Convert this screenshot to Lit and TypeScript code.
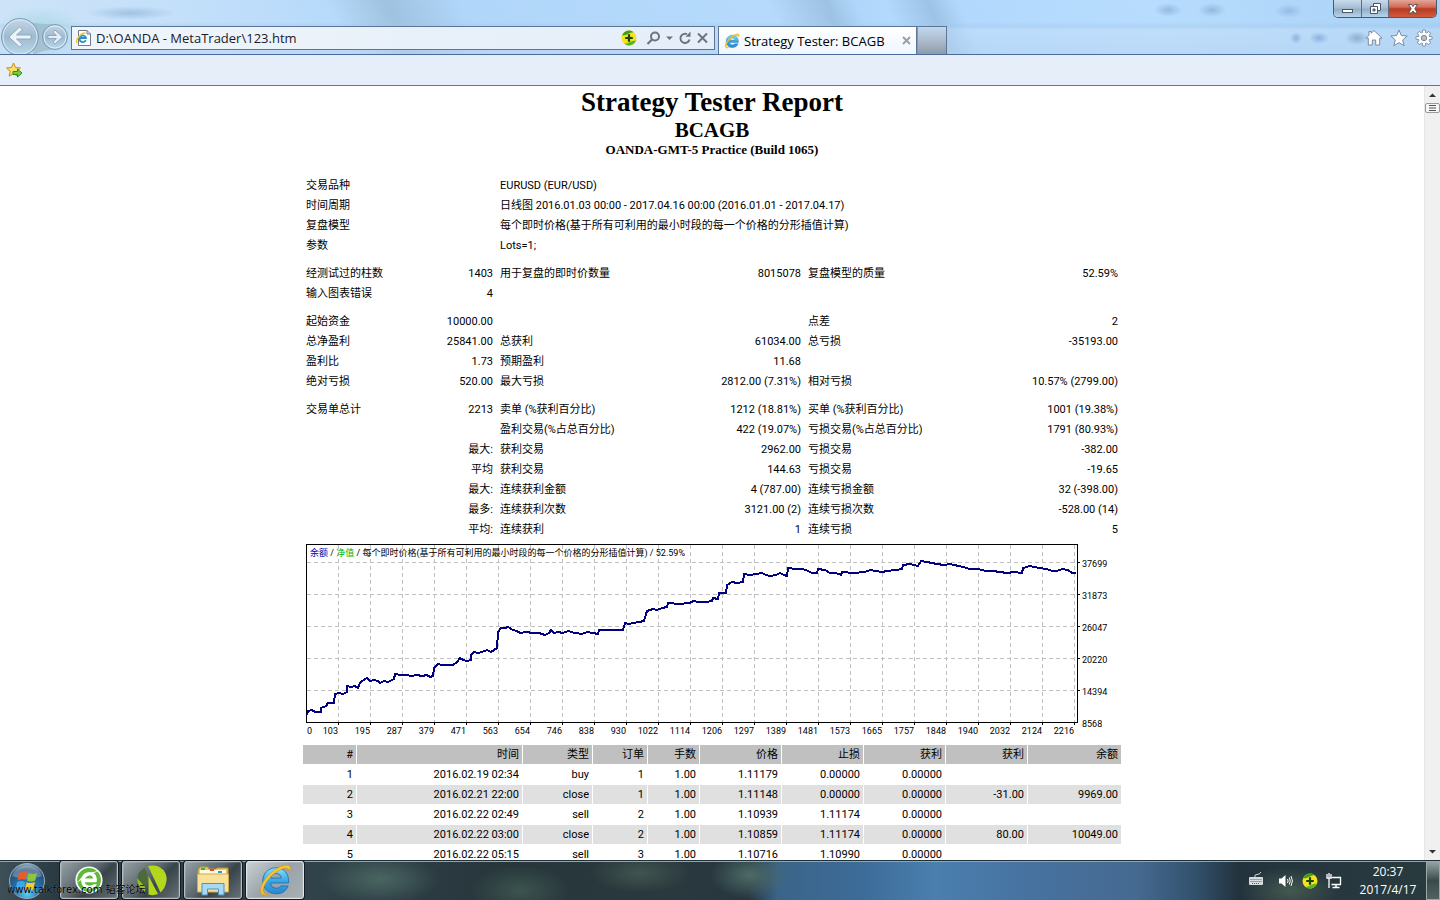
import { LitElement, html, svg, css, nothing } from "lit";
import { customElement } from "lit/decorators.js";

type Cell = { text: string; span?: number; num?: boolean };
const l = (text: string, span = 1): Cell => ({ text, span });
const n = (text: string, span = 1): Cell => ({ text, span, num: true });

/* null marks a spacer row between groups */
const SUMMARY: (Cell[] | null)[] = [
  [l("交易品种", 2), l("EURUSD (EUR/USD)", 4)],
  [l("时间周期", 2), l("日线图 2016.01.03 00:00 - 2017.04.16 00:00 (2016.01.01 - 2017.04.17)", 4)],
  [l("复盘模型", 2), l("每个即时价格(基于所有可利用的最小时段的每一个价格的分形插值计算)", 4)],
  [l("参数", 2), l("Lots=1;", 4)],
  null,
  [l("经测试过的柱数"), n("1403"), l("用于复盘的即时价数量"), n("8015078"), l("复盘模型的质量"), n("52.59%")],
  [l("输入图表错误"), n("4"), l("", 4)],
  null,
  [l("起始资金"), n("10000.00"), l(""), n(""), l("点差"), n("2")],
  [l("总净盈利"), n("25841.00"), l("总获利"), n("61034.00"), l("总亏损"), n("-35193.00")],
  [l("盈利比"), n("1.73"), l("预期盈利"), n("11.68"), l("", 2)],
  [l("绝对亏损"), n("520.00"), l("最大亏损"), n("2812.00 (7.31%)"), l("相对亏损"), n("10.57% (2799.00)")],
  null,
  [l("交易单总计"), n("2213"), l("卖单 (%获利百分比)"), n("1212 (18.81%)"), l("买单 (%获利百分比)"), n("1001 (19.38%)")],
  [n("", 2), l("盈利交易(%占总百分比)"), n("422 (19.07%)"), l("亏损交易(%占总百分比)"), n("1791 (80.93%)")],
  [n("最大:", 2), l("获利交易"), n("2962.00"), l("亏损交易"), n("-382.00")],
  [n("平均", 2), l("获利交易"), n("144.63"), l("亏损交易"), n("-19.65")],
  [n("最大:", 2), l("连续获利金额"), n("4 (787.00)"), l("连续亏损金额"), n("32 (-398.00)")],
  [n("最多:", 2), l("连续获利次数"), n("3121.00 (2)"), l("连续亏损次数"), n("-528.00 (14)")],
  [n("平均:", 2), l("连续获利"), n("1"), l("连续亏损"), n("5")],
];

const ORDER_HEAD = ["#", "时间", "类型", "订单", "手数", "价格", "止损", "获利", "获利", "余额"];
const ORDERS = [
  ["1", "2016.02.19 02:34", "buy", "1", "1.00", "1.11179", "0.00000", "0.00000", "", ""],
  ["2", "2016.02.21 22:00", "close", "1", "1.00", "1.11148", "0.00000", "0.00000", "-31.00", "9969.00"],
  ["3", "2016.02.22 02:49", "sell", "2", "1.00", "1.10939", "1.11174", "0.00000", "", ""],
  ["4", "2016.02.22 03:00", "close", "2", "1.00", "1.10859", "1.11174", "0.00000", "80.00", "10049.00"],
  ["5", "2016.02.22 05:15", "sell", "3", "1.00", "1.10716", "1.10990", "0.00000", "", ""],
];

const X_LABELS = ["103", "195", "287", "379", "471", "563", "654", "746", "838", "930", "1022", "1114",
  "1206", "1297", "1389", "1481", "1573", "1665", "1757", "1848", "1940", "2032", "2124", "2216"];
const Y_LABELS = ["37699", "31873", "26047", "20220", "14394", "8568"];

const BALANCE = `1,170 2,166 6,165 9,167 15,167 15,163 20,161 22,158 28,158 29,149 33,148 37,149 41,147 41,141
45,142 49,141 52,143 54,138 59,134 61,133 64,136 68,135 72,136 74,138 78,136 82,137 88,134 89,129 95,130 101,130
105,131 111,130 116,131 121,130 124,132 127,131 128,123 132,119 136,120 141,120 147,120 151,117 154,113 157,115
161,116 165,115 165,110 168,107 172,108 176,107 181,105 185,107 191,103 192,87 195,83 199,83 202,82 207,85 211,86
214,88 220,87 227,88 233,88 239,90 243,88 245,85 248,88 252,87 257,88 262,86 269,88 276,89 281,87 287,88 292,89
293,85 305,85 317,85 319,78 323,79 327,78 333,77 338,76 341,66 347,64 351,65 356,63 361,62 362,58 373,59 384,58
387,56 393,57 400,57 406,56 407,53 412,54 413,48 420,48 421,40 426,37 431,38 437,37 438,29 444,30 450,29 456,28
460,30 464,31 470,30 474,28 478,30 481,31 482,23 490,24 497,24 502,26 506,28 511,28 512,24 519,25 524,28 530,28
535,30 536,27 548,28 559,27 564,25 570,26 576,27 581,26 590,25 596,24 597,20 604,19 608,20 612,21 615,16 621,17
631,19 638,20 644,19 657,22 664,24 672,24 680,26 687,26 694,27 701,28 708,27 716,28 717,23 724,21 733,23 741,24
746,26 751,26 756,24 762,25 766,28 770,28`;

const ieLogo = (size: number) => html`<svg width=${size} height=${size} viewBox="0 0 32 32" aria-hidden="true">
  <defs>
    <linearGradient id="ieb" x1="0" y1="0" x2="0" y2="1"><stop offset="0" stop-color="#8fe0fb"/><stop offset=".5" stop-color="#37a9e6"/><stop offset="1" stop-color="#2a86cf"/></linearGradient>
  </defs>
  <path d="M17 4.5C9.600 4.500 4.500 10 4.500 16.800C4.500 24 9.800 29 17.200 29C22.600 29 26.700 26.200 28.300 21.600H21.500C20.600 23 19.200 23.700 17.300 23.700C14.200 23.700 12 21.800 11.800 18.800H28.800C29.400 10.400 24.600 4.500 17 4.500ZM12 14.200C12.500 11.500 14.500 9.900 17 9.900C19.700 9.900 21.600 11.500 21.900 14.200Z" fill="url(#ieb)" stroke="#1b6fae" stroke-width=".8"/>
  <path d="M4 29.500C-.5 26 5 15 13 8.500C20 2.500 28 .5 30 3.200C30.800 4.500 30.400 6.500 29.600 8.200C29.500 5.500 27.500 4.200 24 5.200C18 7 11 13 7.500 18.500C5 22.600 3.800 26.500 6 28.500C7 29.400 9 29.200 11 28.500C8.500 30.200 5.500 30.600 4 29.500Z" fill="#f8c52c" stroke="#d9971a" stroke-width=".6"/>
</svg>`;

const plusBall = (size: number) => html`<svg width=${size} height=${size} viewBox="0 0 16 16" aria-hidden="true">
  <circle cx="8" cy="8" r="7.500" fill="#f4e21d"/>
  <path d="M1 5.500A7.500 7.500 0 0 1 13 2.400C9 1.800 6.500 5.500 1 5.500Z" fill="#3f9b1d"/>
  <path d="M15 10.500A7.500 7.500 0 0 1 3 13.600C7 14.200 9.500 10.500 15 10.500Z" fill="#57b524"/>
  <path d="M8 4.200V11.800M4.200 8H11.800" stroke="#14460e" stroke-width="2.200"/>
</svg>`;

@customElement("app-root")
export class AppRoot extends LitElement {
  static styles = css`
    :host { display: flex; flex-direction: column; height: 100vh; overflow: hidden; position: relative; background: #fff; color: #000; font-family: "Open Sans", "Noto Sans CJK SC", sans-serif; }
    *, *::before, *::after { box-sizing: border-box; }
    svg { display: block; }
    button { margin: 0; padding: 0; border: 0; background: none; font: inherit; color: inherit; display: grid; place-items: center; }

    .chrome { height: 55px; flex: none; display: flex; align-items: flex-end; border-bottom: 1px solid #4c6a97; position: relative; overflow: hidden;
      background:
        radial-gradient(ellipse 45px 7px at 130px 13px, #8fb3d8aa, transparent),
        radial-gradient(ellipse 46px 26px at 40px 32px, #a4d8e2, transparent),
        radial-gradient(ellipse 14px 7px at 1168px 10px, #7ba4cf99, transparent),
        radial-gradient(ellipse 14px 7px at 1212px 10px, #7ba4cf99, transparent),
        radial-gradient(ellipse 14px 7px at 1289px 11px, #7ba4cf88, transparent),
        radial-gradient(ellipse 6px 6px at 1296px 38px, #6f97cc99, transparent),
        radial-gradient(ellipse 10px 6px at 1319px 38px, #6f97cc99, transparent),
        radial-gradient(ellipse 12px 7px at 1357px 38px, #8fb0cc, transparent),
        linear-gradient(180deg, transparent 22px, #a0c6ea66 26px, #cfe2f655 30px, #bcd6f488 54px),
        linear-gradient(65deg, #cfe4f8 0, #c2dffa 15%, #b7dafb 24%, #9fc2e0 28%, #b0d6f9 33%, #b5dafc 54%, #9dc2e3 58%, #b0d7fb 60%, #b3d9fc 62%, #9dc3e6 65%, #b2d9fd 67%, #b7dcfd 80%, #a9d2f6 100%); }
    .nav { width: 71px; height: 36px; flex: none; display: flex; align-items: center; }
    .address { flex: 47% 1 1; min-width: 0; height: 24px; margin-bottom: 4px; border: 1px solid #5b7595; background: linear-gradient(90deg, #f1f6fc, #e8f0f9 55%, #e6eef9); display: flex; align-items: center; padding: 0 5px 0 4px; gap: 5px; }
    .address input { flex: 1; min-width: 0; border: 0; padding: 0; background: none; font: 13px "Open Sans", sans-serif; color: #1c2026; outline: 0; }
    .tools { display: flex; align-items: center; gap: 3px; color: #6b7480; }
    .tools .ball { margin-right: 6px; }
    .bar { flex: 1; min-width: 0; display: grid; grid-template-columns: minmax(0, 644fr) minmax(0, 722fr); column-gap: 3px; align-items: end; }
    .tabs { display: flex; align-items: flex-end; min-width: 0; }
    .tab { width: 199px; height: 28px; border: 1px solid #5b7595; border-bottom: 0; background: linear-gradient(#fff, #eef6fd); display: flex; align-items: center; gap: 4px; padding: 0 5px 0 5px; font-size: 13px; white-space: nowrap; }
    .tab span { flex: 1; }
    .newtab { width: 30px; height: 28px; border: 1px solid #5b7595; border-left-color: #8796a8; border-bottom: 0; background: linear-gradient(#c0d8f0, #b0bfd0 45%, #8d9aac); }
    .menu { margin-left: auto; display: flex; gap: 7px; padding: 0 7px 7px 0; }
    .caption { position: absolute; right: 3px; top: 0; display: flex; height: 18px; border: 1px solid #4b5a6b; border-top: 0; border-radius: 0 0 5px 5px; overflow: hidden; }
    .caption button { width: 28px; background: linear-gradient(#c9dcee, #a9bed4 45%, #93aec9 55%, #b9d3ec); border-right: 1px solid #5c6d80; }
    .caption .restore { width: 27px; }
    .caption .close { width: 47px; border-right: 0; background: linear-gradient(#e4a597, #d06a55 42%, #b93a22 52%, #cf5a3e); }

    .favorites { height: 31px; flex: none; background: #e6eefa; border-bottom: 1px solid #6c7480; display: flex; align-items: center; padding-left: 6px; }

    .view { flex: 1; min-height: 0; display: flex; }
    .page { flex: 1; min-width: 0; overflow: hidden; display: flex; flex-direction: column; align-items: center; }
    .scroll { width: 16px; background: #f0f0f0; border-left: 1px solid #e6e6e6; display: flex; flex-direction: column; justify-content: space-between; }
    .scroll svg { width: 15px; }

    .titles { font-family: "Liberation Serif", serif; font-weight: bold; text-align: center; }
    h1, h2, h3 { margin: 0; font-weight: bold; }
    h1 { font-size: 27px; line-height: 32px; }
    h2 { font-size: 21px; line-height: 24px; }
    h3 { font-size: 13px; line-height: 16px; }

    .report { width: 100%; max-width: 820px; font: 11px/19px Roboto, "Noto Sans CJK SC", sans-serif; }
    table { width: 100%; table-layout: fixed; border-collapse: separate; border-spacing: 1px; font: inherit; }
    td, th { padding: 0 3px; height: 19px; line-height: 19px; font-weight: normal; white-space: nowrap; text-align: left; }
    .num { text-align: right; }
    .summary { margin-top: 17px; }
    .summary .gap td { height: 7px; line-height: 7px; }
    .c1 { width: 105px; } .c2 { width: 87px; } .c3 { width: 197px; } .c4 { width: 109px; } .c5 { width: 197px; }
    .orders th { background: #c0c0c0; text-align: right; }
    .orders td { text-align: right; }
    .orders tr:nth-child(even) td { background: #e0e0e0; }
    .o1 { width: 53px; } .o2 { width: 165px; } .o3 { width: 69px; } .o4 { width: 54px; } .o5 { width: 51px; } .o6 { width: 81px; }
    .chart { width: 100%; height: auto; margin: 2px 0 4px; font: 9px Roboto, "Noto Sans CJK SC", sans-serif; }

    .taskbar { height: 40px; flex: none; display: flex; align-items: stretch; color: #fff; border-top: 1px solid #1f3038; box-shadow: inset 0 1px #8fa7b4;
      background:
        radial-gradient(ellipse 60px 26px at 380px 18px, #4a6661, transparent),
        radial-gradient(ellipse 50px 26px at 520px 30px, #3c544f, transparent),
        radial-gradient(ellipse 50px 20px at 640px 12px, #41544f, transparent),
        radial-gradient(ellipse 40px 24px at 750px 14px, #4d6b67, transparent),
        radial-gradient(ellipse 50px 24px at 1290px 30px, #44584f, transparent),
        linear-gradient(90deg, #3d4f57 0, #2b3a42 4%, #30424a 22%, #27363b 35%, #2a393e 47%, #26363f 52%, #3b6488 54%, #3d6c99 60%, #4a7fae 65%, #47719f 72%, #456a90 79%, #32516c 83%, #22333d 86%, #2a3b3f 100%); }
    .start { width: 60px; padding-right: 6px; }
    .apps { display: flex; gap: 4px; }
    .apps button { width: 58px; margin-bottom: 1px; border: 1px solid #b3bcc0; border-radius: 3px; box-shadow: inset 0 0 0 1px #ffffff22, 0 0 0 1px #121c22; background: linear-gradient(135deg, #98a2a6, #59666b 45%, #38444a 60%, #667176); }
    .apps .active { background: linear-gradient(135deg, #c9d0d4, #98a2a8 50%, #a9b1b5); border-color: #e0e6e8; }
    .tray { margin-left: auto; display: flex; align-items: center; }
    .icons { display: flex; align-items: center; gap: 8px; padding-right: 8px; }
    .kb { margin-right: 6px; }
    .clock { width: 76px; text-align: center; font-size: 12px; line-height: 18px; }
    .desk { width: 14px; align-self: stretch; border: 1px solid #9aa9a8; background: linear-gradient(#93a3a1, #3a4a4c 50%, #53625f); }
    .mark { position: absolute; left: 7px; bottom: 1px; font: 10px/18px "DejaVu Sans", "Noto Sans CJK SC", sans-serif; color: #000; white-space: nowrap; text-shadow: 0 0 1px #ffffff66; }
  `;

  private chrome() {
    return html`<header class="chrome">
      <nav class="nav" aria-label="Navigation">
        <svg width="71" height="38" viewBox="0 0 71 38">
          <defs><linearGradient id="nb" x1="0" y1="0" x2="0" y2="1"><stop offset="0" stop-color="#c3d7e6"/><stop offset=".5" stop-color="#9fbad0"/><stop offset="1" stop-color="#b8dbe9"/></linearGradient></defs>
          <path d="M20 2Q34 8 55 7V32Q40 34 34 38Z" fill="#9ab5c8aa"/>
          <circle cx="20" cy="20" r="18.500" fill="url(#nb)" stroke="#7f9db6"/>
          <circle cx="20" cy="20" r="17" fill="none" stroke="#dcecf7"/>
          <path d="M31 18V22H16.500L22.500 27.500L19.500 30L9 20L19.500 10L22.500 12.500L16.500 18Z" fill="#ecf3f9" stroke="#8aa4bc" stroke-width=".9"/>
          <circle cx="55" cy="20" r="12.500" fill="url(#nb)" stroke="#7f9db6"/>
          <circle cx="55" cy="20" r="11" fill="none" stroke="#dcecf7"/>
          <path d="M48 18.500V21.500H56.500L53 25L55 27L62.500 20L55 13L53 15L56.500 18.500Z" fill="#e6eff7" stroke="#8aa4bc" stroke-width=".9"/>
        </svg>
      </nav>
      <div class="bar">
      <div class="address">
        <svg width="15" height="16" viewBox="0 0 15 16" aria-hidden="true">
          <path d="M2.500.5H11L14.500 4V15.500H2.500Z" fill="#fff" stroke="#6d7b8a"/><path d="M11 .5V4H14.500" fill="none" stroke="#6d7b8a"/>
          <path d="M9.800 10.200A3.300 3.300 0 1 1 10 8H4" fill="none" stroke="#2a8fd0" stroke-width="1.800"/>
          <path d="M1 13C-1 10 5 2.500 9.500 3" fill="none" stroke="#efc52c" stroke-width="1.500"/>
        </svg>
        <input aria-label="Address" value="D:\\OANDA - MetaTrader\\123.htm" />
        <div class="tools">
          <button class="ball" aria-label="360">${plusBall(16)}</button>
          <button aria-label="Search"><svg width="16" height="16" viewBox="0 0 16 16"><circle cx="9" cy="6.500" r="4" fill="none" stroke="#6b7480" stroke-width="2"/><path d="M6 9.500L1.500 14" stroke="#6b7480" stroke-width="2.200"/></svg></button>
          <button aria-label="Search options"><svg width="9" height="8" viewBox="0 0 9 8"><path d="M1 2.500H8L4.500 6Z" fill="#6b7480"/></svg></button>
          <button aria-label="Refresh"><svg width="16" height="16" viewBox="0 0 16 16"><path d="M12.500 9.500A4.600 4.600 0 1 1 10 4.200" fill="none" stroke="#6b7480" stroke-width="2"/><path d="M8.500 6.800H13.500V1.500Z" fill="#6b7480"/></svg></button>
          <button aria-label="Stop"><svg width="13" height="16" viewBox="0 0 13 16"><path d="M2 3.500L11 12.500M11 3.500L2 12.500" stroke="#6b7480" stroke-width="2"/></svg></button>
        </div>
      </div>
      <div class="tabs">
        <div class="tab">${ieLogo(16)}<span>Strategy Tester: BCAGB</span>
          <button aria-label="Close tab"><svg width="9" height="9" viewBox="0 0 9 9"><path d="M1 1L8 8M8 1L1 8" stroke="#9aa0a6" stroke-width="2"/></svg></button>
        </div>
        <button class="newtab" aria-label="New tab"></button>
        <div class="menu">
          <button aria-label="Home"><svg width="18" height="18" viewBox="0 0 18 18"><path d="M9 1.500L17 9.200H14.700V16H10.700V11H7.300V16H3.300V9.200H1L4 6.300V2.500H6.200V4.200Z" fill="#fff" stroke="#6f8196" stroke-width=".9"/></svg></button>
          <button aria-label="Favorites"><svg width="18" height="18" viewBox="0 0 18 18"><path d="M9 1L11.300 6.500L17.200 7L12.700 10.900L14.100 16.700L9 13.600L3.900 16.700L5.300 10.900L.8 7L6.700 6.500Z" fill="#fff" stroke="#6f8196" stroke-width=".9"/></svg></button>
          <button aria-label="Tools"><svg width="18" height="18" viewBox="0 0 18 18">
            ${[0, 45, 90, 135].map((a) => svg`<rect x="7.400" y="1" width="3.200" height="16" rx=".8" fill="#fff" stroke="#6f8196" stroke-width=".9" transform="rotate(${a} 9 9)"/>`)}
            <circle cx="9" cy="9" r="5.400" fill="#fff"/><circle cx="9" cy="9" r="2.700" fill="#b4bec9" stroke="#6f8196" stroke-width=".9"/></svg></button>
        </div>
      </div>
      </div>
      <div class="caption">
        <button aria-label="Minimize"><svg width="13" height="14" viewBox="0 0 13 14"><rect x="1.500" y="7.500" width="10" height="3" fill="#fff" stroke="#4a5765"/></svg></button>
        <button class="restore" aria-label="Restore"><svg width="13" height="14" viewBox="0 0 13 14"><g fill="#fff" stroke="#4a5765"><path d="M4.500 1.500H11.500V8.500H4.500Z"/><path d="M1.500 4.500H8.500V11.500H1.500Z"/><path d="M4 7H6V9H4Z" fill="#9db5cc"/></g></svg></button>
        <button class="close" aria-label="Close"><svg width="12" height="12" viewBox="0 0 12 12"><path d="M1.500 1.500H4.500L6 3.500L7.500 1.500H10.500L7.800 5.700L10.500 10H7.500L6 8L4.500 10H1.500L4.200 5.700Z" fill="#fff" stroke="#5a4444" stroke-width=".9"/></svg></button>
      </div>
    </header>`;
  }

  private chart() {
    return html`<svg class="chart" viewBox="0 0 820 198" role="img" aria-label="Balance chart">
      <g stroke="#c0c0c0" stroke-dasharray="4 3">
        ${X_LABELS.map((_, i) => svg`<path d="M${36.5 + i * 32} 3V180"/>`)}
        ${Y_LABELS.slice(0, 5).map((_, i) => svg`<path d="M5 ${20.5 + i * 32}H775"/>`)}
      </g>
      <g stroke="#000">
        ${X_LABELS.map((_, i) => svg`<path d="M${36.5 + i * 32} 181V183"/>`)}
        ${Y_LABELS.slice(0, 5).map((_, i) => svg`<path d="M776 ${20.5 + i * 32}H778"/>`)}
      </g>
      <rect x="4.500" y="2.500" width="771" height="178" fill="none" stroke="#000"/>
      <polyline points=${BALANCE} transform="translate(4 3)" fill="none" stroke="#000080" stroke-width="2" shape-rendering="crispEdges"/>
      <text x="8" y="14"><tspan fill="#0000a8">余额</tspan> / <tspan fill="#00b000">净值</tspan> / 每个即时价格(基于所有可利用的最小时段的每一个价格的分形插值计算) / 52.59%</text>
      <text x="5" y="192">0</text>
      ${X_LABELS.map((t, i) => svg`<text x=${36 + i * 32} y="192" text-anchor="end">${t}</text>`)}
      ${Y_LABELS.map((t, i) => svg`<text x="780" y=${25 + i * 32}>${t}</text>`)}
    </svg>`;
  }

  private taskbar() {
    return html`<footer class="taskbar">
      <button class="start" aria-label="Start"><svg width="38" height="38" viewBox="0 0 38 38">
        <defs><radialGradient id="orb" cx=".5" cy=".85" r=".9"><stop offset="0" stop-color="#5fd0f4"/><stop offset=".4" stop-color="#2471ad"/><stop offset=".75" stop-color="#2a4f74"/><stop offset="1" stop-color="#b3c9d9"/></radialGradient></defs>
        <circle cx="19" cy="19" r="17.500" fill="url(#orb)" stroke="#8fb0c4"/>
        <path d="M4 14A16 16 0 0 1 34 14Q19 20 4 14Z" fill="#ffffff44"/>
        <path d="M11 11.500Q14.500 8.500 19 10.500L17.500 18Q13.500 16.500 9.500 18.500Z" fill="#ef5a24"/>
        <path d="M20.500 11Q24.500 13 29 11L27.300 18.500Q23 20.500 19 18.500Z" fill="#8cc63c"/>
        <path d="M9 20Q13 18 17 19.800L15.500 27Q11.500 25.300 7.500 27.500Z" fill="#3ca7e8"/>
        <path d="M18.700 20.200Q22.500 22 27 20L25.300 27.300Q21 29.500 17 27.500Z" fill="#fbc924"/>
      </svg></button>
      <div class="apps">
        <button aria-label="360 Browser"><svg width="30" height="30" viewBox="0 0 32 32"><circle cx="16" cy="16" r="14.500" fill="#fff"/><circle cx="16" cy="16" r="12.700" fill="#5fb83a"/><path d="M24 18.500H11.500Q12.500 22 16.500 22Q19.500 22 21 20.500H24.500Q22 25.500 16.300 25.500Q8 25 7.500 16.500Q8.500 8 16.300 7.500Q24 8 24.500 15.500ZM11.800 14.500H20.500Q19.500 11 16.200 11Q12.800 11 11.800 14.500Z" fill="#fff"/><path d="M3 19Q10 8 27 6Q14 11 3 19Z" fill="#fff"/></svg></button>
        <button aria-label="OANDA MetaTrader"><svg width="34" height="34" viewBox="0 0 34 34"><path d="M14 3C26 0 34 9 32.500 18Q31 26 26.500 29.500Z" fill="#b2d71d"/><path d="M14.500 13L24 31Q19 33 14.500 31.500Z" fill="#b2d71d"/><path d="M10.500 5L13 10V17L11 29Q3 24 3 16Q4 8.500 10.500 5Z" fill="#4e6a3a"/><path d="M3 15L11 24V29Q3 24 3 15Z" fill="#9bbd25"/></svg></button>
        <button aria-label="Explorer"><svg width="34" height="32" viewBox="0 0 34 32">
          <path d="M2 6L4 3H12L13 5H20L21 4H32V27H2Z" fill="#e7c869" stroke="#b8923a"/><rect x="4" y="6" width="26" height="6" fill="#fff8dc"/><rect x="5" y="4" width="4" height="2" fill="#3fae49"/><rect x="14" y="5" width="4" height="2" fill="#d9502e"/><rect x="22" y="7" width="4" height="2" fill="#3c8fd0"/>
          <path d="M1.500 10H32.500V28H1.500Z" fill="#f8e29a" stroke="#cfa94b"/><path d="M6 31V19.500H28V31H22.500V25H11.500V31Z" fill="#a9d8f2" stroke="#4a93c4"/></svg></button>
        <button class="active" aria-label="Internet Explorer">${ieLogo(34)}</button>
      </div>
      <div class="tray">
        <div class="icons">
        <button class="kb" aria-label="Keyboard"><svg width="16" height="20" viewBox="0 0 16 20"><path d="M7 6Q6 3.500 9 3.500T13 1" fill="none" stroke="#cfd6d8"/><rect x="1" y="6" width="14" height="8" rx="1" fill="#d7dcde"/><path d="M2.500 8.500H13.500M2.500 10.500H13.500M4 12.500H12" stroke="#59656a" stroke-dasharray="1 1"/></svg></button>
        <button aria-label="Volume"><svg width="16" height="16" viewBox="0 0 16 16"><path d="M1 5.500H3.500L7.500 2V14L3.500 10.500H1Z" fill="#fff"/><path d="M9.500 6Q10.700 8 9.500 10M11.300 4.500Q13.200 8 11.300 11.500M13 3Q15.900 8 13 13" fill="none" stroke="#fff"/></svg></button>
        <button aria-label="360">${plusBall(16)}</button>
        <button aria-label="Network"><svg width="16" height="16" viewBox="0 0 16 16"><path d="M5.500 4.500H14.500V11.500H5.500" fill="#25363c" stroke="#fff" stroke-width="1.300"/><path d="M10 12V14.500M6.500 14.500H13.500" stroke="#fff" stroke-width="1.500"/><path d="M1 1V5H5V1M3 0V4M3 5V15" fill="none" stroke="#fff" stroke-width="1.300"/></svg></button>
        </div>
        <div class="clock"><div>20:37</div><div>2017/4/17</div></div>
        <button class="desk" aria-label="Show desktop"></button>
      </div>
    </footer>`;
  }

  render() {
    return html`
      ${this.chrome()}
      <div class="favorites"><button aria-label="Add to favorites"><svg width="17" height="17" viewBox="0 0 17 17"><path d="M7.500 1L9.500 5.500L14.500 6L10.800 9.300L11.900 14.200L7.500 11.600L3.100 14.200L4.200 9.300L.5 6L5.500 5.500Z" fill="#fbe066" stroke="#c98a1c"/><path d="M7 9.500H11.500V7L16 11L11.500 15V12.500H7Z" fill="#6fd13c" stroke="#2f8a1c"/></svg></button></div>
      <div class="view">
        <main class="page">
          <div class="titles"><h1>Strategy Tester Report</h1><h2>BCAGB</h2><h3>OANDA-GMT-5 Practice (Build 1065)</h3></div>
          <div class="report">
            <table class="summary">
              <colgroup><col class="c1"><col class="c2"><col class="c3"><col class="c4"><col class="c5"><col></colgroup>
              <tbody>${SUMMARY.map((row) => row
                ? html`<tr>${row.map((c) => html`<td class=${c.num ? "num" : nothing} colspan=${c.span ?? 1}>${c.text}</td>`)}</tr>`
                : html`<tr class="gap"><td colspan="6"></td></tr>`)}</tbody>
            </table>
            ${this.chart()}
            <table class="orders">
              <colgroup><col class="o1"><col class="o2"><col class="o3"><col class="o4"><col class="o5"><col class="o6"><col class="o6"><col class="o6"><col class="o6"><col></colgroup>
              <thead><tr>${ORDER_HEAD.map((t) => html`<th scope="col">${t}</th>`)}</tr></thead>
              <tbody>${ORDERS.map((r) => html`<tr>${r.map((t) => html`<td>${t}</td>`)}</tr>`)}</tbody>
            </table>
          </div>
        </main>
        <div class="scroll" aria-hidden="true">
          <svg height="30" viewBox="0 0 15 30"><path d="M4 11H11L7.500 7.500Z" fill="#333"/><rect x=".5" y="17.500" width="14" height="9" rx="1.500" fill="#f6f6f6" stroke="#9a9a9a"/><path d="M4 19.500H11M4 22H11M4 24.500H11" stroke="#555"/></svg>
          <svg height="16" viewBox="0 0 15 16"><path d="M4 6H11L7.500 9.500Z" fill="#333"/></svg>
        </div>
      </div>
      ${this.taskbar()}
      <div class="mark">www.talkforex.com 韬客论坛</div>
    `;
  }
}
